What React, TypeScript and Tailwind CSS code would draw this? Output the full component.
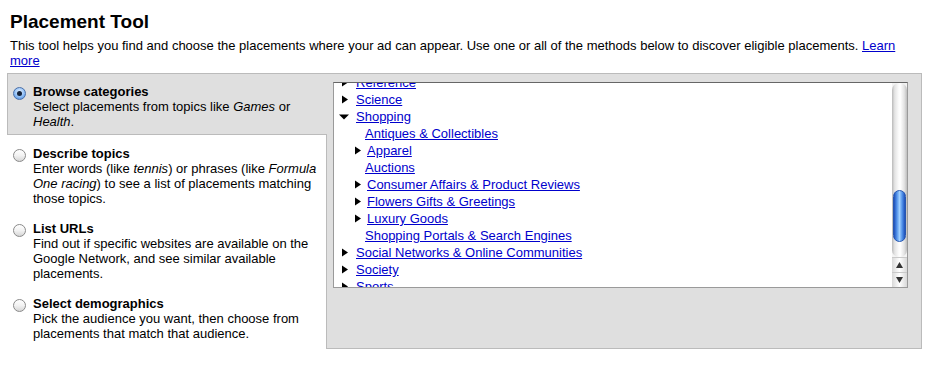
import React from "react";

type Node = { label: string; level: 0 | 1; arrow: "right" | "down" | "none" };

const TREE: Node[] = [
  { label: "Reference", level: 0, arrow: "right" },
  { label: "Science", level: 0, arrow: "right" },
  { label: "Shopping", level: 0, arrow: "down" },
  { label: "Antiques & Collectibles", level: 1, arrow: "none" },
  { label: "Apparel", level: 1, arrow: "right" },
  { label: "Auctions", level: 1, arrow: "none" },
  { label: "Consumer Affairs & Product Reviews", level: 1, arrow: "right" },
  { label: "Flowers Gifts & Greetings", level: 1, arrow: "right" },
  { label: "Luxury Goods", level: 1, arrow: "right" },
  { label: "Shopping Portals & Search Engines", level: 1, arrow: "none" },
  { label: "Social Networks & Online Communities", level: 0, arrow: "right" },
  { label: "Society", level: 0, arrow: "right" },
  { label: "Sports", level: 0, arrow: "right" },
];

const Radio = ({ checked }: { checked?: boolean }) =>
  checked ? (
    <span className="mt-[3px] flex h-[13px] w-[13px] shrink-0 items-center justify-center rounded-full border border-[#4a6fa8] bg-[radial-gradient(circle_at_50%_35%,#e4f1ff,#8fbef5_55%,#3f7fd6)]">
      <span className="h-[5px] w-[5px] rounded-full bg-[#14223a]" />
    </span>
  ) : (
    <span className="mt-[3px] h-[13px] w-[13px] shrink-0 rounded-full border border-[#8a8a8a] bg-[linear-gradient(to_bottom,#ffffff,#f2f2f2_50%,#d6d6d6)]" />
  );

const Method = ({
  title,
  checked,
  className,
  children,
}: {
  title: string;
  checked?: boolean;
  className?: string;
  children: React.ReactNode;
}) => (
  <div className={"flex gap-[7px] pr-[3px] " + (className ?? "")}>
    <Radio checked={checked} />
    <div className="flex-1 text-[13px] leading-[15px] text-black">
      <div className="font-bold">{title}</div>
      <div>{children}</div>
    </div>
  </div>
);

const Arrow = ({ dir }: { dir: "right" | "down" }) =>
  dir === "right" ? (
    <svg width="6" height="9" viewBox="0 0 6 9">
      <polygon points="0,0.5 6,4.5 0,8.5" fill="#000" />
    </svg>
  ) : (
    <svg width="10" height="6" viewBox="0 0 10 6">
      <polygon points="0,0.5 10,0.5 5,5.5" fill="#000" />
    </svg>
  );

const TreeRow = ({ node }: { node: Node }) => {
  const pad =
    node.level === 0 ? "pl-[5px]" : node.arrow === "none" ? "pl-[31px]" : "pl-[21px]";
  return (
    <div className={"flex h-[17px] items-center whitespace-nowrap " + pad}>
      {node.arrow !== "none" && (
        <span
          className={
            "flex items-center " +
            (node.level === 0 ? "w-[17px] " : "w-[12px] ") +
            (node.arrow === "right" && node.level === 0 ? "pl-[3px]" : "")
          }
        >
          <Arrow dir={node.arrow} />
        </span>
      )}
      <a href="#" className="text-[13px] leading-[17px] text-[#0000cc] underline">
        {node.label}
      </a>
    </div>
  );
};

const Scrollbar = () => (
  <div className="flex w-[15px] shrink-0 flex-col bg-[#f3f3f3]">
    <div className="flex-1 rounded-t-[7px] rounded-b-[7px] bg-[linear-gradient(to_right,#b9b9b9,#e4e4e4_18%,#fbfbfb_45%,#ffffff_55%,#e2e2e2_82%,#bdbdbd)] pt-[107px]">
      <div className="mx-auto h-[52px] w-[13px] rounded-full border border-[#2656b0] bg-[linear-gradient(to_right,#1d4fb8,#4f8fe8_25%,#9fd0ff_50%,#4f8fe8_75%,#1d4fb8)]" />
    </div>
    <div className="flex h-[15px] items-center justify-center border-t border-[#c9c9c9] bg-[linear-gradient(to_right,#d8d8d8,#ffffff_50%,#d8d8d8)]">
      <svg width="7" height="6" viewBox="0 0 7 6">
        <polygon points="3.5,0 7,6 0,6" fill="#333" />
      </svg>
    </div>
    <div className="flex h-[15px] items-center justify-center border-t border-[#c9c9c9] bg-[linear-gradient(to_right,#d8d8d8,#ffffff_50%,#d8d8d8)]">
      <svg width="7" height="6" viewBox="0 0 7 6">
        <polygon points="0,0 7,0 3.5,6" fill="#333" />
      </svg>
    </div>
  </div>
);

export default function App() {
  return (
    <div className="h-[372px] w-[937px] overflow-hidden bg-white font-['Liberation_Sans',Arial,sans-serif] text-black">
      <div className="px-[10px] pt-[11px]">
        <h1 className="text-[19px] font-bold leading-[22px]">Placement Tool</h1>
        <p className="mt-[5px] text-[13px] leading-[15px]">
          This tool helps you find and choose the placements where your ad can appear. Use
          one or all of the methods below to discover eligible placements.{" "}
          <a href="#" className="text-[#0000cc] underline">
            Learn more
          </a>
        </p>
      </div>

      <div className="ml-[7px] mt-[5px] flex">
        <div className="flex w-[320px] flex-col">
          <div className="border-b border-l border-t border-[#bbbbbb] bg-[#dfdfdf] pb-[5px] pl-[5px] pt-[10px]">
            <Method title="Browse categories" checked>
              Select placements from topics like <i>Games</i> or <i>Health</i>.
            </Method>
          </div>
          <div className="flex-1 border-r border-[#bbbbbb] pl-[6px]">
            <Method title="Describe topics" className="pb-[4px] pt-[11px]">
              Enter words (like <i>tennis</i>) or phrases (like <i>Formula One racing</i>) to
              see a list of placements matching those topics.
            </Method>
            <Method title="List URLs" className="pb-[4px] pt-[11px]">
              Find out if specific websites are available on the Google Network, and see
              similar available placements.
            </Method>
            <Method title="Select demographics" className="pb-[4px] pt-[11px]">
              Pick the audience you want, then choose from placements that match that
              audience.
            </Method>
          </div>
        </div>

        <div className="h-[276px] w-[595px] border-b border-r border-t border-[#bbbbbb] bg-[#dfdfdf] pl-[6px] pt-[8px]">
          <div className="flex h-[206px] w-[575px] border border-[#9a9a9a] border-t-[#666666] bg-white">
            <div className="flex-1 overflow-hidden">
              <div className="-mt-[9px]">
                {TREE.map((n) => (
                  <TreeRow key={n.label} node={n} />
                ))}
              </div>
            </div>
            <Scrollbar />
          </div>
        </div>
      </div>
    </div>
  );
}
